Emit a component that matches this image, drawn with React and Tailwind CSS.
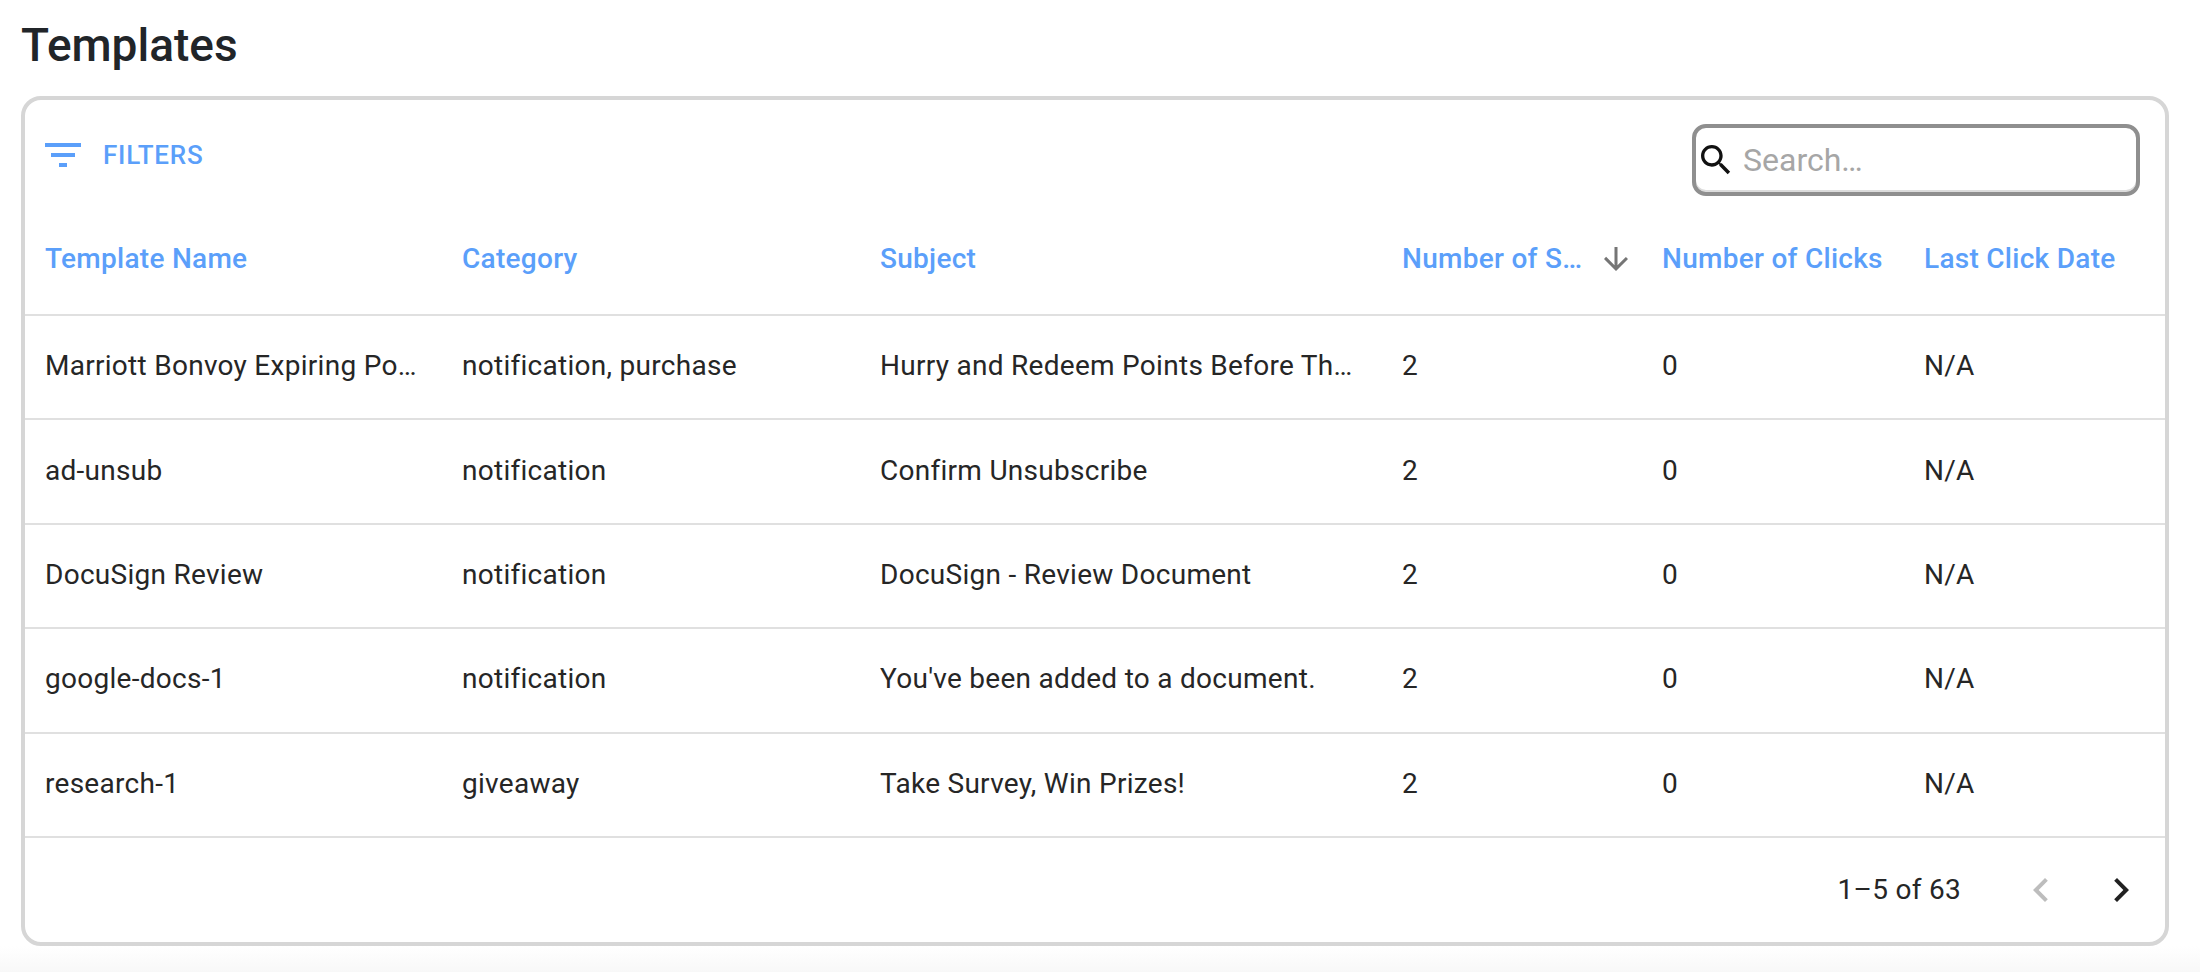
const columns = 'grid grid-cols-[417px_418px_522px_260px_262px_261px]';

const rows = [
  ['Marriott Bonvoy Expiring Points', 'notification, purchase', 'Hurry and Redeem Points Before They Expire', '2', '0', 'N/A'],
  ['ad-unsub', 'notification', 'Confirm Unsubscribe', '2', '0', 'N/A'],
  ['DocuSign Review', 'notification', 'DocuSign - Review Document', '2', '0', 'N/A'],
  ['google-docs-1', 'notification', "You've been added to a document.", '2', '0', 'N/A'],
  ['research-1', 'giveaway', 'Take Survey, Win Prizes!', '2', '0', 'N/A'],
];

function Icon({ d, className }) {
  return (
    <svg viewBox="0 0 24 24" fill="currentColor" className={className}>
      <path d={d} />
    </svg>
  );
}

function HeaderCell({ children, sorted }) {
  return (
    <div className={`flex min-w-0 items-center pl-5 pt-[2px] ${sorted ? 'pr-[8px]' : 'pr-5'}`}>
      <span className="truncate">{children}</span>
      {sorted && (
        <Icon
          d="M20 12l-1.41-1.41L13 16.17V4h-2v12.17l-5.58-5.59L4 12l8 8 8-8z"
          className="ml-[6px] h-9 w-9 shrink-0 text-[#757575]"
        />
      )}
    </div>
  );
}

export default function App() {
  return (
    <div className="h-[972px] overflow-hidden bg-[linear-gradient(to_bottom,#ffffff_946px,#f8f8f8_972px)] pl-[21px] font-['Roboto',sans-serif] text-[#212121]">
      <h1 className="flex h-[96px] items-center pb-[6px] text-[46px] font-medium leading-none text-[#212529]">Templates</h1>

      <section className="h-[850px] w-[2148px] rounded-[20px] border-4 border-[#d6d6d6] bg-white">
        <div className="flex h-[102px] items-start justify-between pl-[14px] pr-[25px]">
          <button type="button" className="mt-[31px] flex items-center gap-[16px] text-[26px] font-medium uppercase tracking-[0.02857em] text-[#5b9ffa]">
            <Icon d="M10 18h4v-2h-4v2zM3 6v2h18V6H3zm3 7h12v-2H6v2z" className="h-12 w-12" />
            Filters
          </button>
          <div className="mt-[24px] flex h-[72px] w-[448px] items-center rounded-[14px] border-4 border-[#8f8f8f] shadow-[inset_0_-2px_0_#dcdcdc]">
            <Icon
              d="M15.5 14h-.79l-.28-.27C15.41 12.59 16 11.11 16 9.5 16 5.91 13.09 3 9.5 3S3 5.91 3 9.5 5.91 16 9.5 16c1.61 0 3.09-.59 4.23-1.57l.27.28v.79l5 4.99L20.49 19l-4.99-5zm-6 0C7.01 14 5 11.99 5 9.5S7.01 5 9.5 5 14 7.01 14 9.5 11.99 14 9.5 14z"
              className="h-10 w-10 shrink-0 text-[#111111]"
            />
            <span className="ml-[7px] text-[32px] text-[#a6a6a6]">Search…</span>
          </div>
        </div>

        <div className={`${columns} h-[114px] border-b-2 border-[#e0e0e0] text-[28px] font-medium tracking-[0.01em] text-[#5b9ffa]`}>
          <HeaderCell>Template Name</HeaderCell>
          <HeaderCell>Category</HeaderCell>
          <HeaderCell>Subject</HeaderCell>
          <HeaderCell sorted>Number of Sends</HeaderCell>
          <HeaderCell>Number of Clicks</HeaderCell>
          <HeaderCell>Last Click Date</HeaderCell>
        </div>

        {rows.map((row) => (
          <div key={row[0]} className={`${columns} h-[104.4px] border-b-2 border-[#e0e0e0] text-[28px] tracking-[0.01em] text-[#262626]`}>
            {row.map((cell, i) => (
              <div key={i} className="flex min-w-0 items-center px-5 pb-[2px]">
                <span className="truncate">{cell}</span>
              </div>
            ))}
          </div>
        ))}

        <div className="flex h-[104px] items-center justify-end pr-[20px]">
          <span className="text-[28px] tracking-[0.01em] text-[#262626]">1–5 of 63</span>
          <Icon d="M15.41 16.59 10.83 12l4.58-4.59L14 6l-6 6 6 6z" className="ml-[56px] h-12 w-12 text-[#bdbdbd]" />
          <Icon d="M8.59 16.59 13.17 12 8.59 7.41 10 6l6 6-6 6z" className="ml-[32px] h-12 w-12 text-[#212121]" />
        </div>
      </section>
    </div>
  );
}
